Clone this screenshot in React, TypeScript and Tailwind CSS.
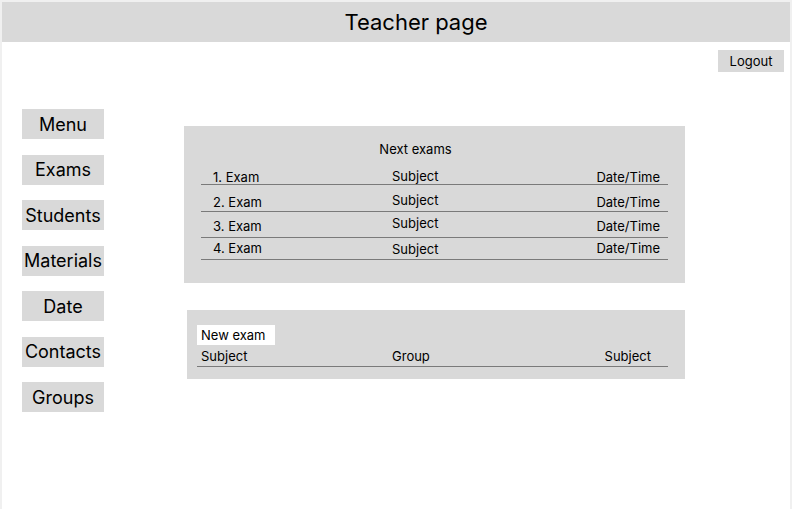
const sideItems = ["Menu", "Exams", "Students", "Materials", "Date", "Contacts", "Groups"];

const exams = [
  { n: "1. Exam", h: "h-[25px]", exam: "mb-[-1px]", subject: "mb-0", date: "mb-[-1px]" },
  { n: "2. Exam", h: "h-[27px]", exam: "mb-[1px]", subject: "mb-[3px]", date: "mb-[1px]" },
  { n: "3. Exam", h: "h-[26px]", exam: "mb-[3px]", subject: "mb-[6px]", date: "mb-[3px]" },
  { n: "4. Exam", h: "h-[22px]", exam: "mb-[3px]", subject: "mb-[2px]", date: "mb-[3px]" },
];

export default function App() {
  return (
    <div
      className="w-[792px] h-[509px] bg-white border-x-2 border-t-2 border-[#f0f0f0] flex flex-col text-black overflow-hidden"
      style={{ fontFamily: "Inter, 'Noto Sans', sans-serif" }}
    >
      <header className="h-10 bg-[#d9d9d9] flex items-center justify-center pl-10 text-[22px]">
        Teacher page
      </header>

      <div className="flex justify-end mt-2 mr-[6px]">
        <button className="w-[66px] h-[22px] bg-[#d9d9d9] text-[13px] flex items-center justify-center pt-[1px]">
          Logout
        </button>
      </div>

      <div className="flex mt-[37px]">
        <nav className="flex flex-col gap-[15.5px] pl-5">
          {sideItems.map((item) => (
            <button
              key={item}
              className="w-[82px] h-[30px] bg-[#d9d9d9] text-[18px] flex items-center justify-center"
            >
              {item}
            </button>
          ))}
        </nav>

        <main className="flex flex-col ml-20 mt-[17px]">
          <section className="w-[501px] h-[157px] bg-[#d9d9d9] pt-[15px] pl-[17px]">
            <div className="w-[467px] text-center text-[13px] leading-4 pr-[38px]">Next exams</div>
            <div className="w-[467px] mt-[3px] text-[13px] leading-4">
              {exams.map((e) => (
                <div key={e.n} className={`flex items-end border-b border-[#7a7a7a] ${e.h}`}>
                  <span className={`w-[191px] pl-3 ${e.exam}`}>{e.n}</span>
                  <span className={e.subject}>Subject</span>
                  <span className={`flex-1 text-right pr-2 ${e.date}`}>Date/Time</span>
                </div>
              ))}
            </div>
          </section>

          <section className="w-[498px] h-[69px] bg-[#d9d9d9] mt-[27px] ml-[3px] pt-[15px] pl-[10px]">
            <div className="w-[78px] h-5 bg-white text-[13px] flex items-center pl-1 pt-[1px]">New exam</div>
            <div className="w-[471px] h-[22px] flex items-end border-b border-[#7a7a7a] text-[13px] leading-4 pb-[2px]">
              <span className="w-[195px] pl-1">Subject</span>
              <span>Group</span>
              <span className="flex-1 text-right pr-[17px]">Subject</span>
            </div>
          </section>
        </main>
      </div>
    </div>
  );
}
